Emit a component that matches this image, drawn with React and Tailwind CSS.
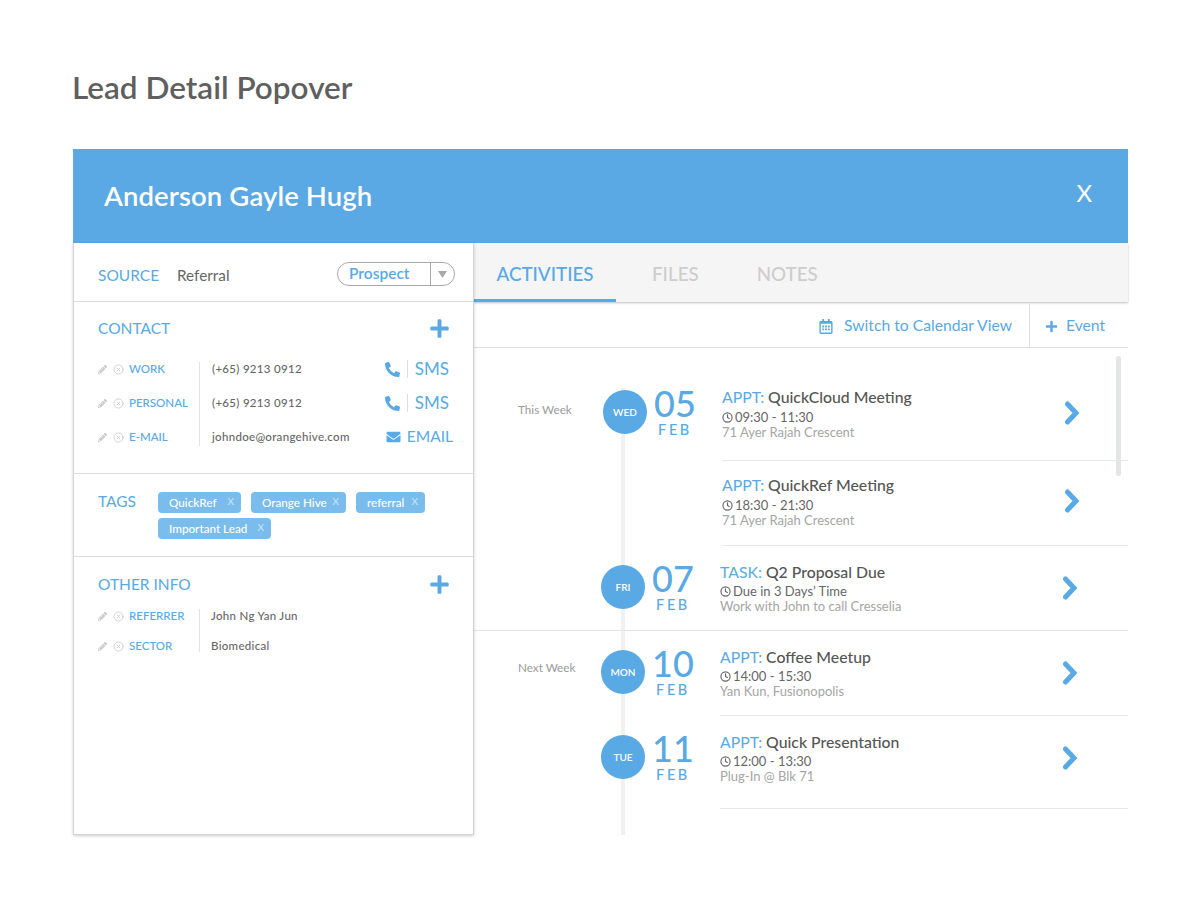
import React from "react";
import { FaPencilAlt, FaPhoneAlt, FaEnvelope, FaPlus, FaRegCalendarAlt } from "react-icons/fa";
import { CircleX, Clock } from "lucide-react";

const contacts = [
	{ label: "WORK", value: "(+65) 9213 0912", sms: true },
	{ label: "PERSONAL", value: "(+65) 9213 0912", sms: true },
	{ label: "E-MAIL", value: "johndoe@orangehive.com", sms: false },
];

const tags = [
	{ name: "QuickRef", w: "w-[83px]" },
	{ name: "Orange Hive", w: "w-[95px]" },
	{ name: "referral", w: "w-[69px]" },
	{ name: "Important Lead", w: "w-[113px]" },
];

const events = [
	{ h: "h-[113px]", pt: "pt-[39px]", shift: "pl-[2px]", pr: "pr-[48px]", weekCls: "pl-[42px] pt-[15px]", week: "This Week", day: "WED", date: "05", kind: "APPT:", title: "QuickCloud Meeting", time: "09:30 - 11:30", place: "71 Ayer Rajah Crescent" },
	{ h: "h-[85px]", pt: "pt-[14px]", shift: "pl-[2px]", pr: "pr-[48px]", kind: "APPT:", title: "QuickRef Meeting", time: "18:30 - 21:30", place: "71 Ayer Rajah Crescent" },
	{ h: "h-[85px]", pt: "pt-[16px]", shift: "", pr: "pr-[50px]", day: "FRI", date: "07", kind: "TASK:", title: "Q2 Proposal Due", time: "Due in 3 Days’ Time", place: "Work with John to call Cresselia", weekEnd: true },
	{ h: "h-[85px]", pt: "pt-[16px]", shift: "", pr: "pr-[50px]", weekCls: "pl-[44px] pt-[13px]", week: "Next Week", day: "MON", date: "10", kind: "APPT:", title: "Coffee Meetup", time: "14:00 - 15:30", place: "Yan Kun, Fusionopolis" },
	{ h: "h-[93px]", pt: "pt-[16px]", shift: "", pr: "pr-[50px]", day: "TUE", date: "11", kind: "APPT:", title: "Quick Presentation", time: "12:00 - 13:30", place: "Plug-In @ Blk 71" },
];

function RowTools() {
	return (
		<div className="flex items-center gap-[6px] text-[#c9c9c9] w-[31px]">
			<FaPencilAlt className="w-[9px] h-[9px]" />
			<CircleX className="w-[11px] h-[11px]" strokeWidth={1.8} />
		</div>
	);
}

function Chevron() {
	return (
		<svg width="16" height="24" viewBox="0 0 16 24" className="mt-[14px] shrink-0">
			<path d="M3.5 3 L12 12 L3.5 21" fill="none" stroke="#58a9e4" strokeWidth="5" strokeLinecap="round" strokeLinejoin="miter" />
		</svg>
	);
}

function EventRow({ ev }) {
	return (
		<div className={`relative flex ${ev.h} ${ev.shift} ${ev.weekEnd ? "border-b border-[#e4e4e4]" : ""}`}>
			<div className={`w-[127px] ${ev.pt} shrink-0`}>
				{ev.week && <div className={`${ev.weekCls} text-[11.7px] leading-[14px] text-[#9a9a9a]`}>{ev.week}</div>}
			</div>
			<div className={`w-[119px] ${ev.pt} shrink-0`}>
				{ev.day && (
					<div className="flex items-start mt-[3px]">
						<div className="w-[44px] h-[44px] rounded-full bg-[#58a9e4] text-white text-[10px] font-semibold flex items-center justify-center shrink-0">
							{ev.day}
						</div>
						<div className="w-[56px] text-center text-[#58a9e4] -mt-[6px]">
							<div className="text-[36px] leading-[38px] font-medium">{ev.date}</div>
							<div className="text-[14.5px] leading-[16px] tracking-[2.6px] font-medium">FEB</div>
						</div>
					</div>
				)}
			</div>
			<div className={`flex-1 ${ev.pt} ${ev.pr} flex justify-between ${ev.weekEnd ? "" : "border-b border-[#e8e8e8]"}`}>
				<div>
					<div className="text-[15.8px] leading-[20px] text-[#555] font-medium">
						<span className="text-[#58a9e4] font-normal">{ev.kind}</span> {ev.title}
					</div>
					<div className={`flex items-center gap-[2px] text-[13px] leading-[16px] ${ev.shift ? "mt-[2px]" : "mt-[1px]"} text-[#666]`}>
						<Clock className="w-[11px] h-[11px]" strokeWidth={2.5} />
						{ev.time}
					</div>
					<div className="text-[13px] leading-[15px] text-[#a5a5a5]">{ev.place}</div>
				</div>
				<Chevron />
			</div>
		</div>
	);
}

export default function App() {
	return (
		<div className="w-[1200px] h-[908px] bg-white overflow-hidden pt-[68px] pl-[72px] font-['Lato',sans-serif]">
			<h1 className="text-[31.5px] leading-[38px] font-semibold text-[#5f5f5f]">Lead Detail Popover</h1>

			<div className="ml-[1px] mt-[43px] w-[1055px]">
				<div className="h-[94px] bg-[#5aa9e4] flex items-center justify-between pl-[31px] pr-[36px] text-white">
					<div className="text-[27.5px] font-semibold tracking-[0.1px]">Anderson Gayle Hugh</div>
					<div className="text-[24px] -mt-[6px]">X</div>
				</div>

				<div className="flex h-[592px]">
					<div className="w-[401px] shrink-0 bg-white border-l border-b border-r border-[#d4d4d4] shadow-[0_1px_3px_rgba(0,0,0,0.2)] z-10">
						<div className="h-[59px] border-b border-[#dcdcdc] flex items-center pt-[7px] pl-[24px] pr-[18px]">
							<span className="text-[15.5px] text-[#58a9e4] w-[79px]">SOURCE</span>
							<span className="text-[15.3px] text-[#666]">Referral</span>
							<div className="ml-auto w-[118px] h-[24px] rounded-full border border-[#a8a8a8] flex items-center -mt-[3px]">
								<span className="flex-1 pl-[11px] text-[15.5px] font-semibold text-[#58a9e4]">Prospect</span>
								<span className="w-[24px] h-full border-l border-[#a8a8a8] flex items-center justify-center">
									<svg width="9" height="7" viewBox="0 0 9 7"><path d="M0 0h9L4.5 7z" fill="#a8a8a8" /></svg>
								</span>
							</div>
						</div>

						<div className="h-[172px] border-b border-[#dcdcdc] pl-[24px] pr-[20px]">
							<div className="h-[50px] pt-[3px] flex items-center justify-between pr-[3px]">
								<span className="text-[15.5px] text-[#58a9e4]">CONTACT</span>
								<FaPlus className="w-[21px] h-[21px] text-[#58a9e4]" />
							</div>
							<div className="relative">
								<div className="absolute left-[101px] top-[10px] bottom-[8px] border-l border-[#e2e2e2]" />
								{contacts.map((c) => (
									<div key={c.label} className="h-[34px] flex items-center">
										<RowTools />
										<span className="w-[70px] text-[11.5px] font-medium text-[#58a9e4]">{c.label}</span>
										<span className="pl-[13px] flex-1 text-[11.5px] font-medium text-[#666] tracking-[0.3px]">
											{c.value}
										</span>
										{c.sms ? (
											<span className="flex items-center text-[#58a9e4] text-[17px] pr-[4px]">
												<FaPhoneAlt className="w-[15px] h-[15px]" />
												<span className="ml-[7px] pl-[7px] border-l border-[#dedede] leading-[18px]">SMS</span>
											</span>
										) : (
											<span className="flex items-center text-[#58a9e4] text-[15.5px]">
												<FaEnvelope className="w-[17px] h-[14px] mr-[5px]" />
												EMAIL
											</span>
										)}
									</div>
								))}
							</div>
						</div>

						<div className="h-[83px] border-b border-[#dcdcdc] pl-[24px] pt-[18px] flex">
							<span className="w-[60px] -mt-[1px] text-[15.5px] leading-[20px] text-[#58a9e4]">TAGS</span>
							<div className="flex flex-wrap gap-x-[10px] gap-y-[5px] w-[290px] content-start">
								{tags.map((t) => (
									<span key={t.name} className={`${t.w} h-[21px] rounded-[4px] bg-[#7abcec] text-white text-[11.7px] font-medium pl-[11px] pr-[7px] flex items-center justify-between`}>
										{t.name}
										<span className="text-[10px] font-normal text-[#cfe6f8] -mt-[3px]">X</span>
									</span>
								))}
							</div>
						</div>

						<div className="pl-[24px] pr-[23px]">
							<div className="h-[44px] pt-[11px] flex items-center justify-between">
								<span className="text-[15.5px] text-[#58a9e4]">OTHER INFO</span>
								<FaPlus className="w-[21px] h-[21px] text-[#58a9e4]" />
							</div>
							<div className="relative">
								<div className="absolute left-[101px] top-[8px] bottom-[9px] border-l border-[#e2e2e2]" />
								{[["REFERRER", "John Ng Yan Jun"], ["SECTOR", "Biomedical"]].map(([k, v]) => (
									<div key={k} className="h-[30px] flex items-center">
										<RowTools />
										<span className="w-[70px] text-[11.5px] font-medium text-[#58a9e4]">{k}</span>
										<span className="pl-[12px] text-[11.5px] font-medium text-[#666] tracking-[0.3px]">
											{v}
										</span>
									</div>
								))}
							</div>
						</div>
					</div>

					<div className="flex-1 min-w-0">
						<div className="h-[59px] bg-[#f5f5f5] shadow-[0_1px_2px_rgba(0,0,0,0.25)] flex items-stretch text-[18.8px] font-medium">
							<div className="w-[142px] flex items-center justify-center text-[#58a9e4] border-b-[3px] border-[#58a9e4] pt-[6px]">ACTIVITIES</div>
							<div className="ml-[36px] pt-[3px] flex items-center text-[#cdcdcd]">FILES</div>
							<div className="ml-[58px] pt-[3px] flex items-center text-[#cdcdcd]">NOTES</div>
						</div>
						<div className="h-[46px] pt-[3px] border-b border-[#dfdfdf] flex justify-end text-[15.7px] text-[#58a9e4]">
							<div className="flex items-center gap-[11px] pr-[17px]">
								<FaRegCalendarAlt className="w-[14px] h-[15px]" />
								Switch to Calendar View
							</div>
							<div className="w-[99px] -mt-[3px] border-l border-[#dfdfdf] flex items-center pt-[3px] pl-[15px] gap-[8px]">
								<FaPlus className="w-[13px] h-[13px]" />
								Event
							</div>
						</div>
						<div className="relative h-[487px]">
							<div className="absolute left-[147px] top-[40px] bottom-0 w-[4px] bg-[#f1f1f1]" />
							<div className="absolute right-[7px] top-[8px] w-[5px] h-[120px] rounded-full bg-[#e4e6e6]" />
							{events.map((ev) => (
								<EventRow key={ev.title} ev={ev} />
							))}
						</div>
					</div>
				</div>
			</div>
		</div>
	);
}
